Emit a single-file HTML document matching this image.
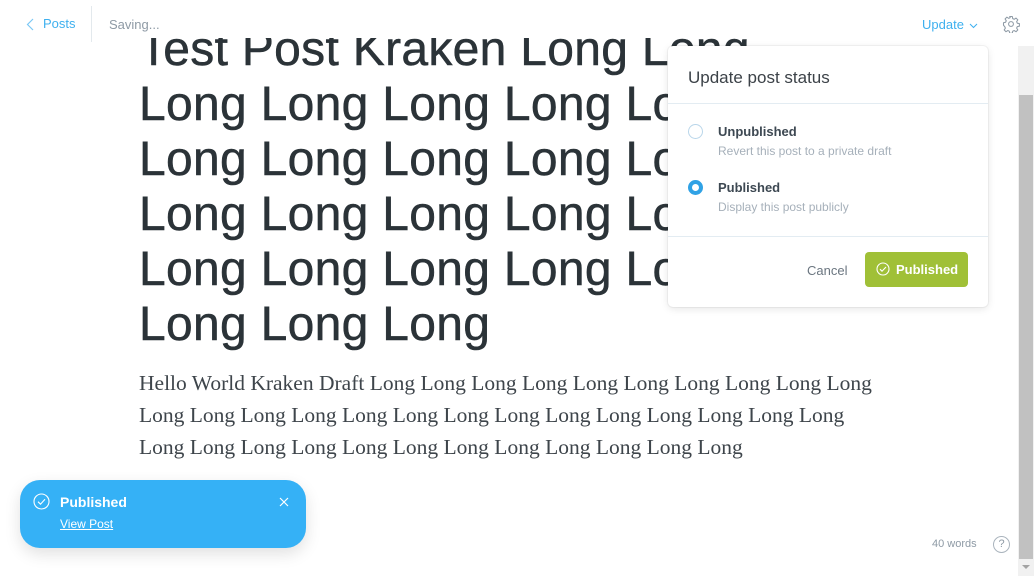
<!DOCTYPE html>
<html><head><meta charset="utf-8"><style>
*{margin:0;padding:0;box-sizing:border-box}
body{width:1034px;height:576px;overflow:hidden;background:#fff;font-family:"Liberation Sans",sans-serif;position:relative}
.title{position:absolute;left:139px;top:22px;font-size:48px;line-height:55px;color:#2b3338;white-space:nowrap;letter-spacing:0.3px;-webkit-text-stroke:0.5px #2b3338}
.body{position:absolute;left:139px;top:367px;font-family:"Liberation Serif",serif;font-size:21.5px;line-height:32px;color:#3e454b;white-space:nowrap}
.hdr{position:absolute;left:0;top:0;width:1018px;height:38px;background:#fff}
.sb{position:absolute;left:1018px;top:46px;width:16px;height:530px;background:#f1f1f1}
.thumb{position:absolute;left:1019px;top:95px;width:14px;height:464px;background:#c1c1c1}
.pop{position:absolute;left:668px;top:46px;width:320px;height:261px;background:#fff;border-radius:5px;box-shadow:0 0 0 1px rgba(0,0,0,.04),0 2px 8px rgba(0,0,0,.1)}
.lbl{position:absolute;left:50px;font-size:13px;font-weight:bold;color:#3d4852}
.sub{position:absolute;left:50px;font-size:12px;color:#a6b0ba}
.toast{position:absolute;left:20px;top:480px;width:286px;height:68px;background:#35b1f6;border-radius:20px;box-shadow:0 6px 16px rgba(0,0,0,.12);color:#fff}
</style></head><body>
<div class="title">Test Post Kraken Long Long<br>Long Long Long Long Long<br>Long Long Long Long Long<br>Long Long Long Long Long<br>Long Long Long Long Long<br>Long Long Long</div>
<div class="body">Hello World Kraken Draft Long Long Long Long Long Long Long Long Long Long<br>Long Long Long Long Long Long Long Long Long Long Long Long Long Long<br>Long Long Long Long Long Long Long Long Long Long Long Long</div>
<div class="hdr">
<svg style="position:absolute;left:26px;top:18px" width="8" height="13" viewBox="0 0 8 13"><path d="M7 1L1.5 6.5L7 12" fill="none" stroke="#7cc8f5" stroke-width="1.2"/></svg>
<span style="position:absolute;left:43px;top:16px;font-size:13px;color:#3eb0ef">Posts</span>
<div style="position:absolute;left:91px;top:6px;width:1px;height:36px;background:#e3e9ed"></div>
<span style="position:absolute;left:109px;top:17px;font-size:13px;color:#8e9aa5">Saving...</span>
<span style="position:absolute;left:922px;top:17px;font-size:13px;color:#3eb0ef">Update</span>
<svg style="position:absolute;left:969px;top:23px" width="9" height="6" viewBox="0 0 9 6"><path d="M1 1l3.5 3.5L8 1" fill="none" stroke="#3eb0ef" stroke-width="1"/></svg>
<svg style="position:absolute;left:1002px;top:15px" width="18" height="18" viewBox="0 0 24 24"><circle cx="12" cy="12" r="3.2" fill="none" stroke="#8e9aa5" stroke-width="1.4"/><path d="M10.3 2h3.4l.6 2.8 2 .9 2.4-1.6 2.4 2.4-1.6 2.4.9 2 2.8.6v3.4l-2.8.6-.9 2 1.6 2.4-2.4 2.4-2.4-1.6-2 .9-.6 2.8h-3.4l-.6-2.8-2-.9-2.4 1.6-2.4-2.4 1.6-2.4-.9-2L2 13.7v-3.4l2.8-.6.9-2-1.6-2.4 2.4-2.4 2.4 1.6 2-.9z" fill="none" stroke="#8e9aa5" stroke-width="1.4" stroke-linejoin="round"/></svg>
</div>
<div class="sb"></div><div class="thumb"></div>
<svg style="position:absolute;left:1022px;top:565px" width="8" height="5"><path d="M0 0h8L4 4z" fill="#a3a3a3"/></svg>
<div class="pop">
<div style="position:absolute;left:20px;top:22px;font-size:17px;color:#3c4248">Update post status</div>
<div style="position:absolute;left:0;top:57px;width:320px;height:1px;background:#e3ecf2"></div>
<div style="position:absolute;left:20px;top:78px;width:15px;height:15px;border-radius:50%;border:1px solid #b9d6ea"></div>
<div class="lbl" style="top:78px">Unpublished</div>
<div class="sub" style="top:98px">Revert this post to a private draft</div>
<div style="position:absolute;left:20px;top:134px;width:15px;height:15px;border-radius:50%;border:4px solid #30a2e5;background:#fff"></div>
<div class="lbl" style="top:134px">Published</div>
<div class="sub" style="top:154px">Display this post publicly</div>
<div style="position:absolute;left:0;top:190px;width:320px;height:1px;background:#e3ecf2"></div>
<div style="position:absolute;left:139px;top:217px;font-size:13px;color:#6b7680">Cancel</div>
<div style="position:absolute;left:197px;top:206px;width:103px;height:35px;background:#a0c037;border-radius:4px;color:#fff;font-size:13px;font-weight:bold">
<svg style="position:absolute;left:11px;top:10px" width="14" height="14" viewBox="0 0 14 14"><circle cx="7" cy="7" r="6" fill="none" stroke="#fff" stroke-width="1.1"/><path d="M4 7.2l2 2 4-4.2" fill="none" stroke="#fff" stroke-width="1.1"/></svg>
<span style="position:absolute;left:31px;top:10px">Published</span></div>
</div>
<div class="toast">
<svg style="position:absolute;left:13px;top:13px" width="17" height="17" viewBox="0 0 17 17"><circle cx="8.5" cy="8.5" r="7.5" fill="none" stroke="#fff" stroke-width="1.1"/><path d="M5 8.7l2.5 2.5 4.5-5" fill="none" stroke="#fff" stroke-width="1.1"/></svg>
<span style="position:absolute;left:40px;top:14px;font-size:14px;font-weight:bold">Published</span>
<span style="position:absolute;left:40px;top:37px;font-size:12px;text-decoration:underline">View Post</span>
<svg style="position:absolute;left:259px;top:17px" width="10" height="10"><path d="M1 1l8 8M9 1l-8 8" stroke="#fff" stroke-width="1.2"/></svg>
</div>
<span style="position:absolute;left:932px;top:538px;font-size:11px;color:#8e9aa5">40 words</span>
<div style="position:absolute;left:993px;top:536px;width:17px;height:17px;border-radius:50%;border:1px solid #aab4bd;color:#8e9aa5;font-size:11px;text-align:center;line-height:15px">?</div>
</body></html>
